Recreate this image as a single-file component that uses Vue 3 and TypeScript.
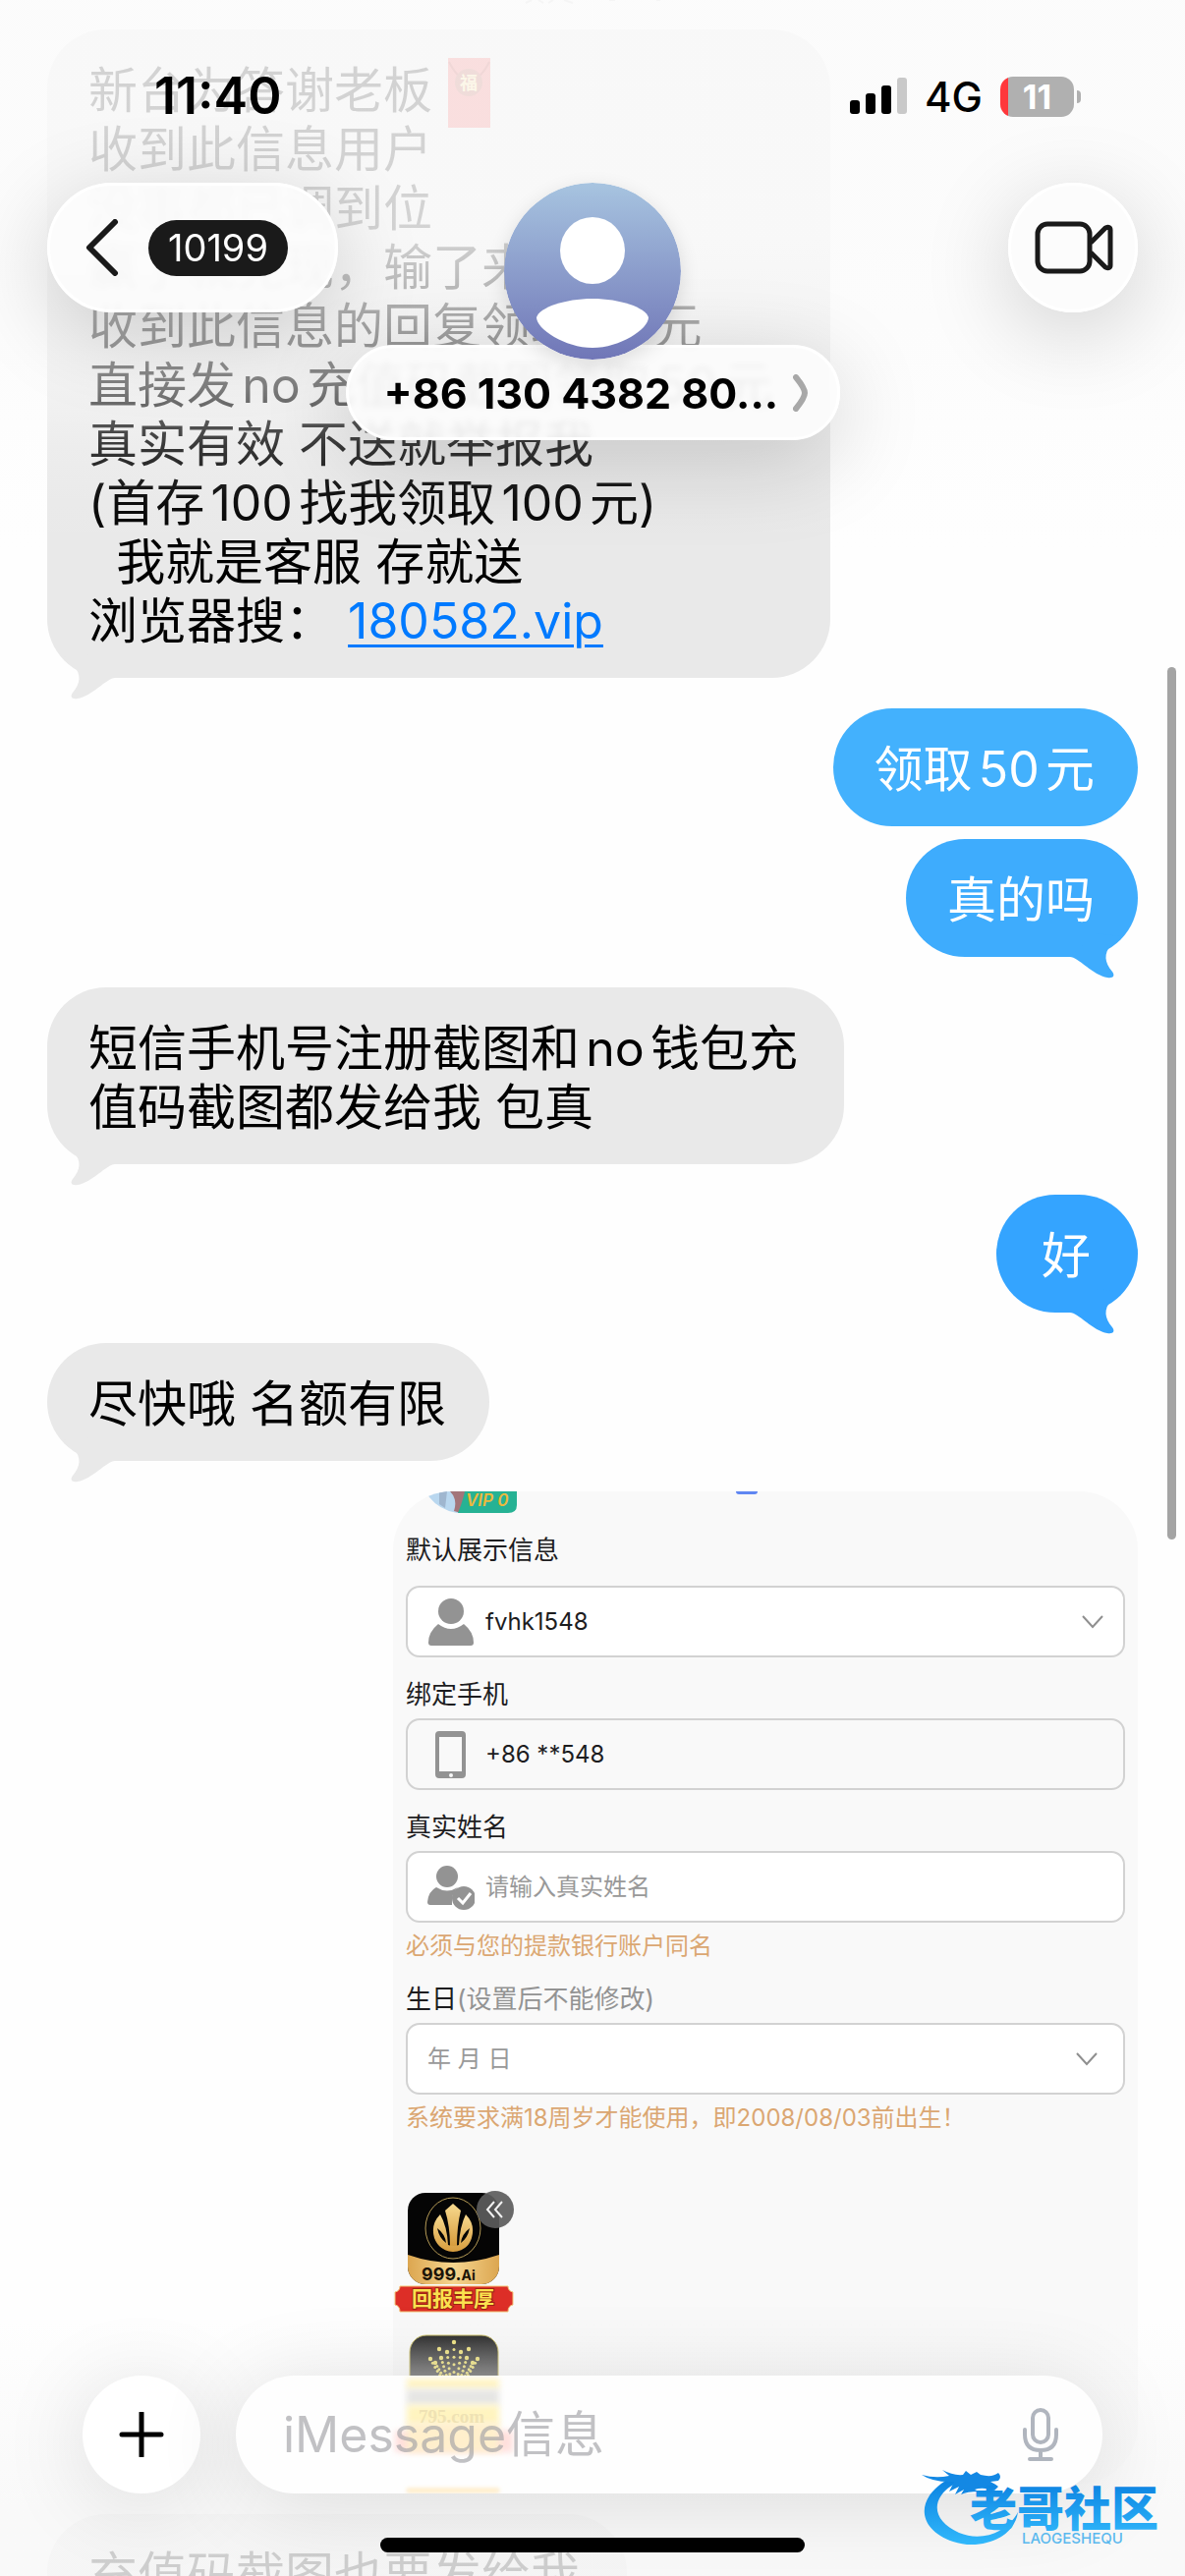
<script setup lang="ts">
import { ref } from 'vue'

interface Bubble {
  id: number
  tone: string
  tail: boolean
  text: string
}

interface Group {
  side: 'in' | 'out'
  bubbles: Bubble[]
}

const offerLines: string[] = [
  '收到此信息用户',
  '没事都已调到位',
  '赢了就兑现，输了来找我',
  '收到此信息的回复领取50元',
  '直接发no充值码截图领取50元',
  '真实有效 不送就举报我',
  '(首存100找我领取100元)',
  '  我就是客服 存就送',
]

const groups: Group[] = [
  {
    side: 'out',
    bubbles: [
      { id: 1, tone: 'sky', tail: false, text: '领取50元' },
      { id: 2, tone: 'azure', tail: true, text: '真的吗' },
    ],
  },
  {
    side: 'in',
    bubbles: [{ id: 3, tone: 'grey', tail: true, text: '短信手机号注册截图和no钱包充值码截图都发给我 包真' }],
  },
  { side: 'out', bubbles: [{ id: 4, tone: 'blue', tail: true, text: '好' }] },
  { side: 'in', bubbles: [{ id: 5, tone: 'grey', tail: true, text: '尽快哦 名额有限' }] },
]

const tailPath = 'M4 24 C12 24 28 43 42 45 C48 46 50 43 47 39 C39 30 38 20 46 12 L56 3 L30 0 Z'

interface Dot {
  x: number
  y: number
  r: number
}

const crownTops: number[][] = [
  [-24, 25],
  [-19, 29],
  [-15, 15],
  [-13, 24],
  [-7, 18],
  [0, 8],
  [7, 18],
  [13, 24],
  [15, 15],
  [19, 29],
  [24, 25],
]

const crownDots: Dot[] = crownTops.flatMap(([dx, top]) => {
  const spike = Math.abs(dx) === 15
  const steps = spike ? 1 : 6
  return Array.from({ length: steps }, (_, i) => {
    const t = steps === 1 ? 0 : i / (steps - 1)
    return { x: 46 + dx * (1 - t * 0.5), y: top + (46 - top) * t, r: i === 0 ? 2.2 : 1.5 }
  })
})

const account = ref('fvhk1548')
const phone = ref('+86 **548')
const realName = ref('')
const birthday = ref('年 月 日')
const draft = ref('')
</script>

<template>
  <div class="screen">
    <main class="thread">
      <section class="group in">
        <article class="bubble grey first">
          <p>新台为答谢老板<svg class="envelope" viewBox="0 0 43 71" aria-hidden="true">
              <rect width="43" height="71" fill="#f04a4a" />
              <path d="M1 4 Q10 22 21 24 Q33 22 42 4" fill="none" stroke="#b81f1c" stroke-width="2" />
              <circle cx="21" cy="25" r="14" fill="#b33c2c" />
              <text x="21" y="32" text-anchor="middle" font-size="18" font-weight="700" fill="#ffe08a">福</text>
            </svg></p>
          <p v-for="line in offerLines" :key="line">{{ line }}</p>
          <p>浏览器搜： <a href="#">180582.vip</a></p>
          <svg class="tail" viewBox="0 0 73 48" aria-hidden="true"><path :d="tailPath" fill="currentColor" /></svg>
        </article>
      </section>

      <section v-for="(group, index) in groups" :key="index" class="group" :class="group.side">
        <article v-for="item in group.bubbles" :key="item.id" class="bubble" :class="item.tone">
          <p>{{ item.text }}</p>
          <svg v-if="item.tail" class="tail" viewBox="0 0 73 48" aria-hidden="true">
            <path :d="tailPath" fill="currentColor" />
          </svg>
        </article>
      </section>

      <section class="group out">
        <article class="card">
          <div class="card-top">
            <svg class="vip" viewBox="0 0 93 22" aria-hidden="true">
              <path d="M0 0 H40 V22 H32 Q10 18 0 0Z" fill="#b9d7ef" />
              <path d="M14 0 H22 L20 17 L14 13Z" fill="#9fb6cf" />
              <path d="M25 0 H42 L36 22 L29 20 Q33 8 25 0Z" fill="#a3757a" />
              <path d="M40 0 H93 V14 Q93 22 84 22 H33 Q38 10 40 0Z" fill="#26b294" />
              <text x="41" y="15" font-size="17" font-style="italic" font-weight="600" fill="#edb93c">VIP 0</text>
            </svg>
            <span class="tab-mark"></span>
          </div>

          <label for="account" class="first-label">默认展示信息</label>
          <div class="field wide-gap">
            <svg class="field-icon" viewBox="0 0 48 48" aria-hidden="true">
              <ellipse cx="24" cy="13" rx="13" ry="13" fill="#939393" />
              <path d="M11 26 Q24 36 37 26 Q47 34 47 45 Q47 48 44 48 H4 Q1 48 1 45 Q1 34 11 26Z" fill="#939393" />
            </svg>
            <select id="account" v-model="account">
              <option>fvhk1548</option>
            </select>
            <svg class="arrow" viewBox="0 0 22 14" aria-hidden="true"><path d="M1 1 L11 12 L21 1" fill="none" stroke="#8f8f8f" stroke-width="2" /></svg>
          </div>

          <label for="phone">绑定手机</label>
          <div class="field plain">
            <svg class="field-icon" viewBox="0 0 48 48" aria-hidden="true">
              <path d="M12 0 H35 Q39 0 39 4 V44 Q39 48 35 48 H12 Q8 48 8 44 V4 Q8 0 12 0Z M12 6 V41 H35 V6Z" fill="#939393" fill-rule="evenodd" />
              <circle cx="24" cy="45" r="2" fill="#f9f9f9" />
            </svg>
            <input id="phone" v-model="phone" type="text" readonly />
          </div>

          <label for="realname">真实姓名</label>
          <div class="field">
            <svg class="field-icon" viewBox="0 0 48 48" aria-hidden="true">
              <circle cx="20" cy="13" r="11" fill="#939393" />
              <path d="M9 24 Q20 31 31 24 Q24 30 25 42 H3 Q0 42 0 39 Q1 28 9 24Z" fill="#939393" />
              <circle cx="37" cy="35" r="12" fill="#939393" />
              <path d="M31 35 L36 40 L44 30" fill="none" stroke="#fff" stroke-width="3" />
            </svg>
            <input id="realname" v-model="realName" type="text" placeholder="请输入真实姓名" />
          </div>
          <p class="hint">必须与您的提款银行账户同名</p>

          <label for="birthday" class="birth-label">生日<span>(设置后不能修改)</span></label>
          <div class="field birth">
            <select id="birthday" v-model="birthday">
              <option>年 月 日</option>
            </select>
            <svg class="arrow" viewBox="0 0 22 14" aria-hidden="true"><path d="M1 1 L11 12 L21 1" fill="none" stroke="#8f8f8f" stroke-width="2" /></svg>
          </div>
          <p class="hint">系统要求满18周岁才能使用，即2008/08/03前出生！</p>

          <div class="promos">
            <svg class="promo" viewBox="0 0 124 126" aria-hidden="true">
              <defs>
                <linearGradient id="gold" x1="0" y1="0" x2="0" y2="1">
                  <stop offset="0" stop-color="#f7d98e" />
                  <stop offset="1" stop-color="#d79c3d" />
                </linearGradient>
                <linearGradient id="goldbar" x1="0" y1="0" x2="1" y2="0">
                  <stop offset="0" stop-color="#dca650" />
                  <stop offset="0.5" stop-color="#f5d58f" />
                  <stop offset="1" stop-color="#dca650" />
                </linearGradient>
                <clipPath id="tile"><rect x="15" y="4" width="93" height="93" rx="18" /></clipPath>
              </defs>
              <g clip-path="url(#tile)">
                <rect x="15" y="4" width="93" height="93" fill="#050505" />
                <path d="M15 67 Q61 83 108 67 V98 H15Z" fill="url(#goldbar)" />
              </g>
              <ellipse cx="61" cy="40" rx="28" ry="31" fill="none" stroke="#b59a55" stroke-width="1" />
              <path d="M61 15 L69 22 Q65 38 65 58 H58 Q58 38 53 22Z" fill="url(#gold)" />
              <path d="M48 26 Q38 36 42 50 Q47 63 61 64 Q76 63 80 50 Q84 36 74 26 Q68 38 67 57 Q61 59 56 57 Q55 38 48 26Z" fill="url(#gold)" />
              <path d="M45 40 Q47 50 54 55 Q53 46 45 40Z M78 40 Q76 50 69 55 Q70 46 78 40Z" fill="#050505" />
              <text x="29" y="93" font-size="18" font-weight="700" fill="#1b1408">999.<tspan font-size="14">Ai</tspan></text>
              <path d="M7 99 H117 Q117 104 122 105 V118 Q117 119 117 125 H7 Q7 119 2 118 V105 Q7 104 7 99Z" fill="#dd2e27" stroke="#f3c67a" stroke-width="1" />
              <text x="61" y="119" text-anchor="middle" font-size="21" font-weight="700" class="ribbon" fill="#fbe14f">回报丰厚</text>
              <circle cx="104" cy="21" r="19" fill="#5c5c5c" fill-opacity="0.92" />
              <path d="M103 13 L96 21 L103 29 M111 13 L104 21 L111 29" fill="none" stroke="#f2f2f2" stroke-width="2" />
            </svg>
            <svg class="crown" viewBox="0 0 92 92" aria-hidden="true">
              <defs>
                <linearGradient id="dusk" x1="0" y1="0" x2="0" y2="1">
                  <stop offset="0" stop-color="#222" />
                  <stop offset="0.5" stop-color="#6b6b6b" />
                </linearGradient>
              </defs>
              <rect x="1" y="1" width="90" height="90" rx="17" fill="url(#dusk)" stroke="#c9bd62" stroke-width="1" />
              <circle v-for="(dot, i) in crownDots" :key="i" :cx="dot.x" :cy="dot.y" :r="dot.r" fill="#ece07b" />
            </svg>
          </div>
        </article>
      </section>

      <section class="group in">
        <article class="bubble grey last"><p>充值码截图也要发给我</p></article>
      </section>
    </main>

    <svg class="edge-marks" viewBox="0 0 144 4" aria-hidden="true">
      <path d="M7 0 L1 3 M14 0 L19 3 M29 0 L24 3 M40 0 L49 3 M86 0 H92 M134 0 H138" fill="none" stroke="#d6d6d6" stroke-width="2" />
    </svg>
    <div class="veil-top"></div>
    <div class="veil-bottom"></div>
    <div class="scrollbar"></div>

    <header class="top">
      <div class="status">
        <time>11:40</time>
        <div class="status-right">
          <svg class="signal" viewBox="0 0 58 38" aria-hidden="true">
            <rect x="0" y="23" width="10" height="14" rx="3" />
            <rect x="16" y="16" width="10" height="21" rx="3" />
            <rect x="32" y="8" width="10" height="29" rx="3" />
            <rect x="48" y="0" width="10" height="37" rx="3" fill="#c9c9c9" />
          </svg>
          <span class="network">4G</span>
          <span class="battery"><b>11</b></span>
        </div>
      </div>
      <nav class="nav">
        <button class="back glass" type="button" aria-label="返回">
          <svg viewBox="0 0 34 58" aria-hidden="true"><path d="M30 3 L4 29 L30 55" fill="none" stroke="#1a1a1a" stroke-width="6" stroke-linecap="round" stroke-linejoin="round" /></svg>
          <span class="count">10199</span>
        </button>
        <div class="contact">
          <svg class="avatar" viewBox="0 0 180 180" aria-hidden="true">
            <defs>
              <linearGradient id="sky" x1="0" y1="0" x2="0" y2="1">
                <stop offset="0" stop-color="#a7c4e0" />
                <stop offset="1" stop-color="#7076b7" />
              </linearGradient>
            </defs>
            <circle cx="90" cy="90" r="90" fill="url(#sky)" />
            <ellipse cx="90" cy="69" rx="33" ry="34" fill="#fff" />
            <path d="M33 137 C36 127 62 118 90 118 C118 118 144 127 147 137 C147 149 118 168 90 168 C62 168 33 149 33 137Z" fill="#fff" />
          </svg>
          <button class="name glass" type="button">
            <span>+86 130 4382 80...</span>
            <svg viewBox="0 0 16 38" aria-hidden="true"><path d="M3 3 Q12 14 12 19 Q12 24 3 35" fill="none" stroke="#a8a8a8" stroke-width="6" stroke-linecap="round" /></svg>
          </button>
        </div>
        <button class="video glass" type="button" aria-label="视频通话">
          <svg viewBox="0 0 80 54" aria-hidden="true">
            <g fill="none" stroke="#1a1a1a" stroke-width="5" stroke-linejoin="round">
              <rect x="3" y="3" width="53" height="48" rx="10" />
              <path d="M57 22 L72 7 Q77 5 77 9 V45 Q77 49 72 47 L57 32" />
            </g>
          </svg>
        </button>
      </nav>
    </header>

    <footer class="bottom">
      <form class="composer" @submit.prevent>
        <button class="plus" type="button" aria-label="添加">
          <svg viewBox="0 0 46 46" aria-hidden="true"><path d="M23 1 V45 M3 23 H43" stroke="#000" stroke-width="5" stroke-linecap="round" /></svg>
        </button>
        <div class="entry">
          <div class="glow" aria-hidden="true">
            <i class="g1"></i><i class="g2"></i><i class="g3"></i><i class="g4"></i><i class="g5"></i>
            <em>795.com</em><i class="g6"></i>
          </div>
          <input v-model="draft" type="text" placeholder="iMessage信息" aria-label="iMessage信息" />
          <svg class="mic" viewBox="0 0 36 54" aria-hidden="true">
            <g fill="none" stroke="#b0b5be" stroke-width="4" stroke-linecap="round">
              <rect x="10" y="2" width="16" height="33" rx="8" />
              <path d="M2 22 V27 Q2 43 18 43 Q34 43 34 27 V22 M18 43 V52 M7 52 H29" />
            </g>
          </svg>
        </div>
      </form>
      <div class="home"></div>
    </footer>

    <svg class="brand" viewBox="0 0 250 90" aria-hidden="true">
      <defs>
        <linearGradient id="azure" x1="0" y1="0" x2="0" y2="1">
          <stop offset="0" stop-color="#0a80e0" />
          <stop offset="1" stop-color="#31b8fb" />
        </linearGradient>
      </defs>
      <path d="M32 16 C-6 34 -8 68 32 82 C58 91 94 80 98 52 C86 74 60 82 38 73 C8 60 8 34 40 20Z" fill="url(#azure)" />
      <path d="M0 14 Q14 18 28 15 L21 9 Q32 15 42 14 L45 10 L50 14 L56 11 L60 14 Q72 17 78 12 Q82 16 78 20 L70 21 Q76 24 78 26 L74 30 Q62 26 54 29 L58 31 Q46 31 40 34 L43 29 L34 34 L38 26 L28 31 L33 21 Q12 22 0 14Z" fill="#1388e4" />
      <text x="49" y="66" font-size="48" font-weight="900" fill="url(#azure)">老哥社区</text>
      <text x="102" y="84" font-size="15" font-weight="500" fill="#5bb9ee">LAOGESHEQU</text>
    </svg>
  </div>
</template>

<style>
body {
  background: #fefefe;
}
</style>

<style scoped>
.screen {
  position: relative;
  height: 100vh;
  overflow: hidden;
  background: #fefefe;
  color: #000;
  font-family: Inter, 'Noto Sans CJK SC', sans-serif;
}

p {
  margin: 0;
}

button,
input,
select {
  margin: 0;
  padding: 0;
  border: 0;
  background: none;
  font: inherit;
  color: inherit;
  appearance: none;
  outline: none;
}

svg {
  display: block;
  flex: none;
}

.thread {
  display: flex;
  flex-direction: column;
  gap: 31px;
  padding: 30px 48px 0;
}

.group {
  display: flex;
  flex-direction: column;
  gap: 13px;
  align-items: flex-start;
}

.group.out {
  align-items: flex-end;
}

.bubble {
  position: relative;
  box-sizing: border-box;
  min-width: 144px;
  max-width: 811px;
  padding: 32px 44px 28px 42px;
  border-radius: 60px;
  font-size: 50px;
  line-height: 60px;
  white-space: pre-wrap;
  text-autospace: normal;
}

.out .bubble {
  color: #fff;
  text-align: center;
}

.first {
  min-width: 797px;
}

.first a {
  color: #007aff;
  text-underline-offset: 6px;
  text-decoration-thickness: 3px;
}

.last {
  min-width: 590px;
}

.envelope {
  display: inline-block;
  width: 43px;
  height: 71px;
  margin: -16px 0 -12px 16px;
  vertical-align: middle;
}

.grey {
  background: #e9e9e9;
}

.sky {
  background: #43b1fd;
}

.azure {
  background: #3eacfd;
}

.blue {
  background: #34a4ff;
}

.tail {
  position: absolute;
  right: 0;
  bottom: -24px;
  width: 73px;
  height: 48px;
}

.grey .tail {
  right: auto;
  left: 0;
  transform: scaleX(-1);
  color: #e9e9e9;
}

.azure .tail {
  color: #3eacfd;
}

.blue .tail {
  color: #34a4ff;
}

.card {
  box-sizing: border-box;
  width: 758px;
  height: 1010px;
  padding: 0 13px;
  overflow: hidden;
  border-radius: 60px;
  background: #f9f9f9;
  color: #1d1d1f;
  font-size: 24px;
  line-height: 36px;
}

.card-top {
  display: flex;
  align-items: flex-start;
  gap: 223px;
  height: 42px;
  padding-left: 20px;
}

.vip {
  width: 93px;
  height: 22px;
}

.tab-mark {
  width: 22px;
  height: 3px;
  border-radius: 0 0 3px 3px;
  background: #5f86f2;
}

.card label {
  display: block;
  margin-top: 20px;
  font-size: 26px;
}

.card .first-label {
  margin-top: 0;
}

.card label span {
  color: #939393;
}

.field {
  position: relative;
  display: flex;
  align-items: center;
  gap: 11px;
  box-sizing: border-box;
  height: 73px;
  margin-top: 6px;
  padding-left: 20px;
  border: 2px solid #d2d2d2;
  border-radius: 14px;
  background: #fff;
}

.wide-gap {
  margin-top: 18px;
}

.plain {
  background: #f9f9f9;
}

.field-icon {
  width: 48px;
  height: 48px;
}

.field input,
.field select {
  flex: 1;
  min-width: 0;
  height: 60px;
}

.field input::placeholder {
  color: #999;
  opacity: 1;
}

.birth select {
  color: #999;
}

.arrow {
  position: absolute;
  right: 20px;
  width: 22px;
  height: 14px;
}

.birth .arrow {
  right: 26px;
}

.hint {
  margin-top: 6px;
  color: #dba772;
}

.card .birth-label {
  margin-top: 18px;
}

.promos {
  margin: 54px 0 0 -13px;
}

.promo {
  width: 124px;
  height: 126px;
}

.ribbon {
  paint-order: stroke;
  stroke: #9c2412;
  stroke-width: 2px;
}

.crown {
  width: 92px;
  height: 92px;
  margin: 22px 0 0 16px;
}

.edge-marks {
  position: absolute;
  top: 0;
  left: 534px;
  width: 144px;
  height: 4px;
}

.veil-top {
  position: absolute;
  inset: 0 0 auto;
  height: 560px;
  background: linear-gradient(
    rgba(251, 251, 251, 0.84) 0,
    rgba(251, 251, 251, 0.84) 240px,
    rgba(251, 251, 251, 0.66) 330px,
    rgba(251, 251, 251, 0.5) 395px,
    rgba(251, 251, 251, 0.22) 455px,
    rgba(251, 251, 251, 0.06) 510px,
    rgba(251, 251, 251, 0) 560px
  );
}

.veil-bottom {
  position: absolute;
  inset: auto 0 0;
  height: 260px;
  background: linear-gradient(rgba(248, 248, 248, 0), rgba(248, 248, 248, 0.3) 60px, rgba(248, 248, 248, 0.83) 190px);
}

.scrollbar {
  position: absolute;
  top: 679px;
  right: 9px;
  width: 9px;
  height: 888px;
  border-radius: 5px;
  background: #a4a4a4;
}

.top {
  position: absolute;
  inset: 0 0 auto;
}

.status {
  display: flex;
  align-items: center;
  justify-content: space-between;
  height: 136px;
  padding: 60px 113px 0 157px;
  box-sizing: border-box;
}

.status time {
  font-size: 52px;
  font-weight: 600;
  line-height: 76px;
}

.status-right {
  display: flex;
  align-items: center;
  gap: 18px;
}

.signal {
  width: 58px;
  height: 38px;
}

.network {
  font-size: 42px;
  font-weight: 500;
}

.battery {
  position: relative;
  width: 75px;
  height: 41px;
  border-radius: 13px;
  background: linear-gradient(to right, #ff383c 8px, #b0b0b0 8px);
  color: #fff;
  font-size: 34px;
  line-height: 41px;
  text-align: center;
}

.battery::after {
  position: absolute;
  top: 14px;
  right: -7px;
  width: 4px;
  height: 13px;
  border-radius: 0 4px 4px 0;
  background: #b0b0b0;
  content: '';
}

.nav {
  display: grid;
  grid-template-columns: 1fr auto 1fr;
  align-items: start;
  padding: 50px 48px 0;
}

.glass {
  box-sizing: border-box;
  border: 3px solid #fff;
  background: rgba(252, 252, 252, 0.9);
  backdrop-filter: blur(3px);
  box-shadow: 0 20px 90px rgba(0, 0, 0, 0.18);
}

.back {
  display: flex;
  align-items: center;
  gap: 30px;
  width: 296px;
  height: 132px;
  padding-left: 36px;
  border-radius: 66px;
}

.back svg {
  width: 34px;
  height: 58px;
}

.count {
  width: 142px;
  border-radius: 29px;
  background: #1a1a1a;
  color: #fff;
  font-size: 38px;
  line-height: 57px;
  text-align: center;
}

.contact {
  display: flex;
  flex-direction: column;
  align-items: center;
}

.avatar {
  position: relative;
  z-index: 1;
  width: 180px;
  height: 180px;
  border-radius: 50%;
  box-shadow: 0 6px 20px rgba(0, 0, 0, 0.12);
}

.name {
  display: flex;
  align-items: center;
  justify-content: space-between;
  width: 503px;
  height: 97px;
  margin-top: -15px;
  padding: 0 29px 0 36px;
  border-radius: 49px;
  font-size: 43px;
  font-weight: 700;
  white-space: nowrap;
}

.name svg {
  width: 16px;
  height: 38px;
}

.video {
  display: flex;
  align-items: center;
  justify-content: center;
  justify-self: end;
  width: 132px;
  height: 132px;
  padding-left: 2px;
  border-radius: 50%;
}

.video svg {
  width: 80px;
  height: 54px;
}

.bottom {
  position: absolute;
  inset: auto 0 0;
  display: flex;
  flex-direction: column;
  align-items: center;
  gap: 45px;
  padding-bottom: 24px;
}

.composer {
  display: flex;
  gap: 36px;
  align-self: stretch;
  padding: 0 84px;
}

.plus {
  display: flex;
  flex: none;
  align-items: center;
  justify-content: center;
  width: 120px;
  height: 120px;
  border-radius: 50%;
  background: #fff;
  box-shadow: 0 10px 90px rgba(0, 0, 0, 0.12);
}

.plus svg {
  width: 46px;
  height: 46px;
}

.entry {
  position: relative;
  display: flex;
  flex: 1;
  align-items: center;
  min-width: 0;
  height: 120px;
  padding: 0 45px 0 48px;
  border-radius: 60px;
  background: #fefefe;
  box-shadow: 0 10px 90px rgba(0, 0, 0, 0.12);
}

.entry input {
  position: relative;
  flex: 1;
  min-width: 0;
  height: 80px;
  font-size: 50px;
}

.entry input::placeholder {
  color: #a2a2a6;
  opacity: 0.65;
}

.mic {
  width: 36px;
  height: 54px;
}

.glow {
  position: absolute;
  inset: 0;
  overflow: hidden;
}

.glow i {
  position: absolute;
  left: 174px;
  width: 94px;
  filter: blur(3px);
}

.glow .g1 {
  top: 3px;
  height: 11px;
  background: #fff4c4;
}

.glow .g2 {
  top: 14px;
  height: 16px;
  background: #e6e6e4;
}

.glow .g3 {
  top: 30px;
  height: 20px;
  background: #fff4c0;
}

.glow .g4 {
  top: 56px;
  left: 162px;
  width: 120px;
  height: 22px;
  background: #ffe0dd;
}

.glow .g5 {
  top: 48px;
  height: 30px;
  background: #ffefcc;
}

.glow .g6 {
  top: 115px;
  height: 4px;
  background: #ffe6b8;
  filter: blur(2px);
}

.glow em {
  position: absolute;
  top: 30px;
  left: 186px;
  color: #efe2b4;
  font: 700 19px/24px 'Liberation Serif', serif;
}

.home {
  width: 432px;
  height: 15px;
  border-radius: 8px;
  background: #000;
}

.brand {
  position: absolute;
  right: 18px;
  bottom: 27px;
  width: 250px;
  height: 90px;
}
</style>
